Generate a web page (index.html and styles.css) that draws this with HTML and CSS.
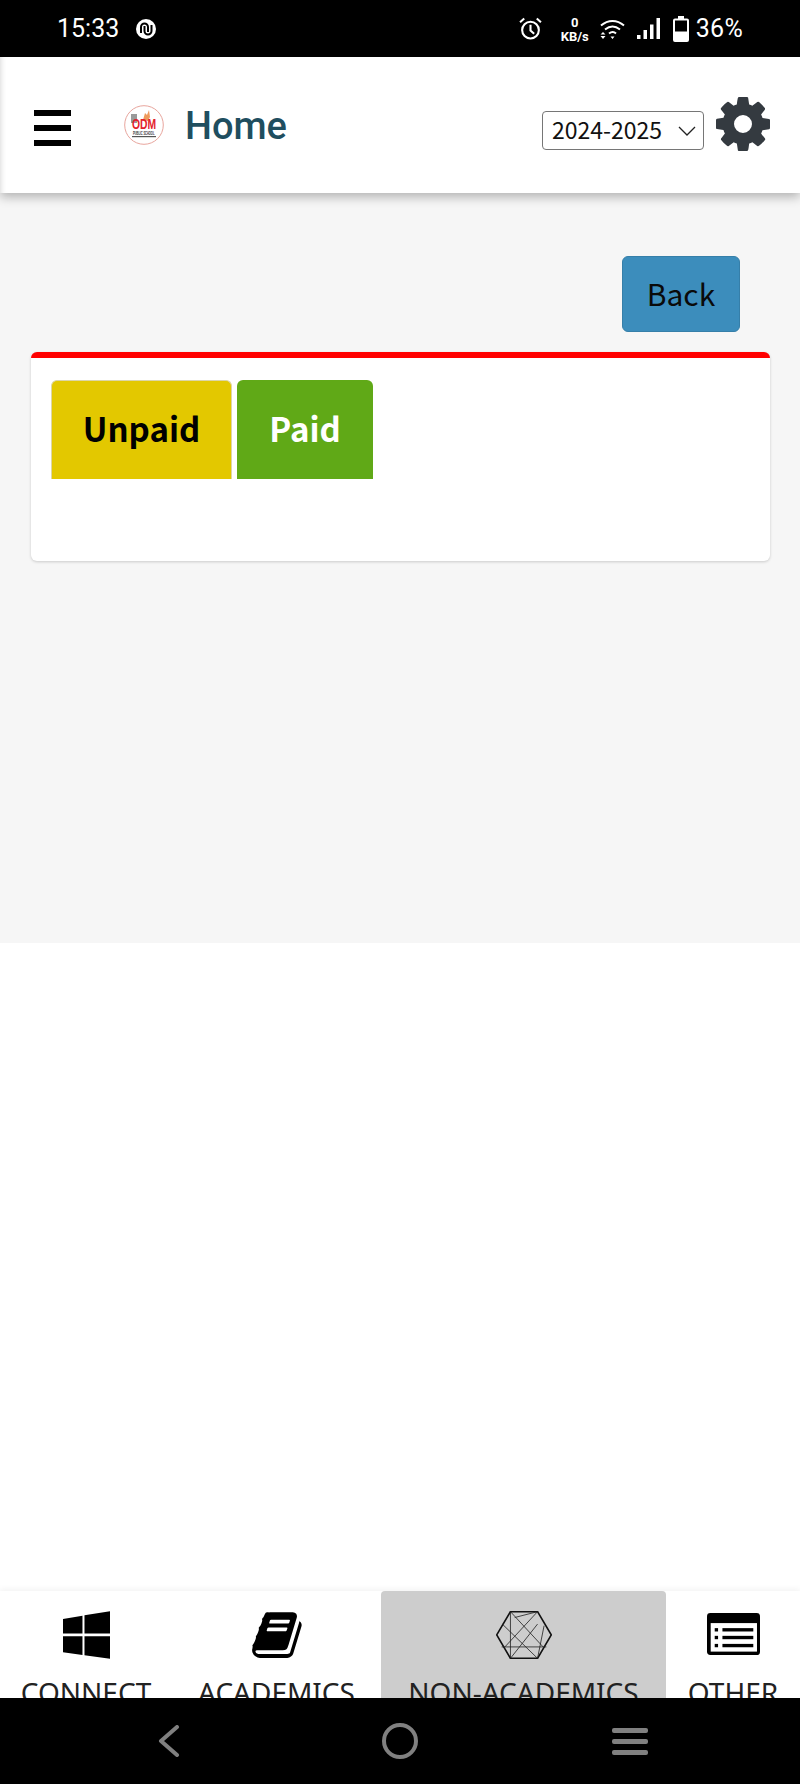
FILE: index.html
```html
<!DOCTYPE html>
<html lang="en">
<head>
  <meta charset="UTF-8" />
  <meta name="viewport" content="width=device-width, initial-scale=1.0"/>
  <title>Home</title>
  <link rel="stylesheet" href="styles.css">
</head>
<body>
  <div class="screen">
    <div class="status-bar">
      <span class="time">15:33</span>
      <svg class="status-app" viewBox="0 0 20 20">
        <circle cx="10" cy="10" r="10" fill="#fff"/>
        <path d="M5 14V8a3.500 3.500 0 0 1 7 0v5M8.500 7v5a3.500 3.500 0 0 0 7 0V6" fill="none" stroke="#000" stroke-width="2"/>
      </svg>
      <div class="status-right">
        <svg class="alarm" viewBox="0 0 22 22">
          <circle cx="11" cy="12.500" r="8" fill="none" stroke="#fff" stroke-width="2"/>
          <path d="M11 7.500v5.500l3.500 3M1 5l4-3.500M21 5l-4-3.500" fill="none" stroke="#fff" stroke-width="2"/>
        </svg>
        <div class="speed"><b>0</b><b>KB/s</b></div>
        <svg class="wifi" viewBox="0 0 25 21">
          <path d="M1 6.500c7-6 16-6 23 0M5 10.500c5-4 10-4 15 0M9 14.500c2.500-2 5-2 7 0" fill="none" stroke="#fff" stroke-width="2"/>
          <path d="M3 13l-2.500 2.500h5zM3 20l-2.500-3h5zM12.500 20l-2-2.500h4z" fill="#fff"/>
        </svg>
        <svg class="signal" viewBox="0 0 23 21">
          <rect x="0" y="17" width="3.500" height="4" fill="#fff"/>
          <rect x="6.500" y="12" width="3.500" height="9" fill="#fff"/>
          <rect x="13" y="6.500" width="3.500" height="14.500" fill="#fff"/>
          <rect x="19.500" y="0" width="3.500" height="21" fill="#fff"/>
        </svg>
        <svg class="battery" viewBox="0 0 16 26">
          <path d="M5 0h6v2.500h3a2 2 0 0 1 2 2V24a2 2 0 0 1-2 2H2a2 2 0 0 1-2-2V4.500a2 2 0 0 1 2-2h3z" fill="#fff"/>
          <rect x="2" y="4.500" width="12" height="11" fill="#000"/>
        </svg>
        <span class="percent">36%</span>
      </div>
    </div>

    <div class="header">
      <div class="hamburger"><span></span><span></span><span></span></div>
      <svg class="logo" viewBox="0 0 40 40">
        <circle cx="20" cy="20" r="19.300" fill="#fff" stroke="#e8a59d" stroke-width="1"/>
        <rect x="7" y="9" width="6" height="9" fill="#9a9a9a"/>
        <path d="M19 15l2-7 2 2 2-5 1 7-2 4z" fill="#ee9a5c"/>
        <text class="logo-odm" transform="translate(8 24) scale(.74 1)">ODM</text>
        <text class="logo-school" transform="translate(9 30) scale(.58 1)">PUBLIC SCHOOL</text>
        <rect x="8" y="31" width="24" height="1.200" fill="#555"/>
      </svg>
      <h1 class="title">Home</h1>
      <div class="year">
        <select class="year-select">
          <option>2024-2025</option>
        </select>
        <svg class="year-arrow" viewBox="0 0 18 10"><path d="M1 1l8 8 8-8" fill="none" stroke="#222" stroke-width="1.300"/></svg>
      </div>
      <svg class="gear" viewBox="128 128 1536 1536">
        <path fill="#343a40" d="M1152 896q0-106-75-181t-181-75-181 75-75 181 75 181 181 75 181-75 75-181zm512-109v222q0 12-8 23t-20 13l-185 28q-19 54-39 91 35 50 107 138 10 12 10 25t-9 23q-27 37-99 108t-94 71q-12 0-26-9l-138-108q-44 23-91 38-16 136-29 186-7 28-36 28h-222q-14 0-24.500-8.500t-11.500-21.500l-28-184q-49-16-90-37l-141 107q-10 9-25 9-14 0-25-11-126-114-165-168-7-10-7-23 0-12 8-23 15-21 51-66.500t54-70.500q-27-50-41-99l-183-27q-13-2-21-12.500t-8-23.500v-222q0-12 8-23t19-13l186-28q14-46 39-92-40-57-107-138-10-12-10-24 0-10 9-23 26-36 98.500-107.500t94.500-71.500q13 0 26 10l138 107q44-23 91-38 16-136 29-186 7-28 36-28h222q14 0 24.500 8.500t11.500 21.500l28 184q49 16 90 37l142-107q9-9 24-9 13 0 25 10 129 119 165 170 7 8 7 22 0 12-8 23-15 21-51 66.500t-54 70.500q26 50 41 98l183 28q13 2 21 12.500t8 23.500z"/>
      </svg>
    </div>

    <div class="main">
      <div class="back-row">
        <button class="back-btn">Back</button>
      </div>
      <div class="card">
        <div class="tabs">
          <div class="tab tab-unpaid">Unpaid</div>
          <div class="tab tab-paid">Paid</div>
        </div>
      </div>
    </div>

    <div class="blank"></div>

    <div class="bottom-tabs">
      <div class="bottom-tab">
        <svg class="icon-windows" viewBox="187 124 140 141">
          <path d="M187 147l58-10v53h-58zM251 136l76-12v66h-76zM187 198h58v56l-58-8zM251 198h76v67l-76-10z" fill="#000"/>
        </svg>
        <span class="bottom-label">CONNECT</span>
      </div>
      <div class="bottom-tab">
        <svg class="icon-book" viewBox="60 120 1680 1550">
          <path fill="#000" d="M1703 478q40 57 18 129l-275 906q-19 64-76.500 107.500t-122.500 43.500h-923q-77 0-148.500-53.500t-99.500-131.500q-24-67-2-127 0-4 3-27t4-37q1-8-3-21.500t-3-19.500q2-11 8-21t16.500-23.500 16.500-23.500q23-38 45-91.500t30-91.500q3-10 .5-30t-.5-28q3-11 17-28t17-23q21-36 42-92t25-90q1-9-2.500-32t.5-28q4-13 22-30.500t22-22.500q19-26 42.500-84.500t27.500-96.500q1-8-3-25.500t-2-26.500q2-8 9-18t18-23 17-21q8-12 16.500-30.500t15-35 16-36 19.500-32 26.500-23.500 36-11.500 47.500 5.500l-1 3q38-9 51-9h761q74 0 114 56t18 130l-274 906q-36 119-71.500 153.500t-128.500 34.500h-869q-27 0-38 15-11 16-1 43 24 70 144 70h923q29 0 56-15.500t35-41.500l300-987q7-22 5-57 38 15 59 43zm-1064 2q-4 13 2 22.500t20 9.500h608q13 0 25.500-9.500t16.500-22.500l21-64q4-13-2-22.500t-20-9.500h-608q-13 0-25.500 9.500t-16.500 22.500zm-83 256q-4 13 2 22.500t20 9.500h608q13 0 25.500-9.500t16.500-22.500l21-64q4-13-2-22.500t-20-9.500h-608q-13 0-25.500 9.500t-16.500 22.500z"/>
        </svg>
        <span class="bottom-label">ACADEMICS</span>
      </div>
      <div class="bottom-tab active">
        <svg class="icon-hex" viewBox="43 60 171 147">
          <path d="M45 133L87 62H170L212 133L170 205H87z" fill="none" stroke="#111" stroke-width="5"/>
          <path d="M87 62V205M87 62L187 170M170 62L70 170M170 62L100 80M170 205L190 105M60 170H197M87 205L170 100M170 205L62 100" fill="none" stroke="#222" stroke-width="2.500"/>
        </svg>
        <span class="bottom-label">NON-ACADEMICS</span>
      </div>
      <div class="bottom-tab">
        <svg class="icon-list" viewBox="922 130 158 125">
          <rect x="922" y="130" width="158" height="125" rx="10" fill="#000"/>
          <rect x="933" y="160" width="138" height="85" fill="#fff"/>
          <rect x="968" y="175" width="92" height="10" fill="#000"/>
          <rect x="968" y="198" width="92" height="10" fill="#000"/>
          <rect x="968" y="222" width="92" height="10" fill="#000"/>
          <rect x="945" y="175" width="10" height="10" fill="#000"/>
          <rect x="945" y="198" width="10" height="10" fill="#000"/>
          <rect x="945" y="222" width="10" height="10" fill="#000"/>
        </svg>
        <span class="bottom-label">OTHER</span>
      </div>
    </div>

    <div class="nav-bar">
      <svg class="nav-back" viewBox="0 0 22 32"><path d="M19 2L3 16l16 14" fill="none" stroke="#808080" stroke-width="4" stroke-linecap="round" stroke-linejoin="round"/></svg>
      <svg class="nav-home" viewBox="0 0 36 36"><circle cx="18" cy="18" r="16" fill="none" stroke="#808080" stroke-width="4"/></svg>
      <div class="nav-menu"><span></span><span></span><span></span></div>
    </div>
  </div>
</body>
</html>
```

FILE: styles.css
```css
* {
  box-sizing: border-box;
}
html, body {
  margin: 0;
  padding: 0;
}
body {
  background: #fff;
}
.screen {
  width: 800px;
  height: 1784px;
  display: flex;
  flex-direction: column;
  overflow: hidden;
}

/* status bar */
.status-bar {
  height: 57px;
  flex: none;
  background: #000;
  color: #fff;
  display: flex;
  align-items: center;
  padding: 0 57px 0 57px;
  font-family: Roboto, sans-serif;
}
.time {
  font-size: 25px;
}
.status-app {
  width: 20px;
  height: 20px;
  margin-left: 17px;
}
.status-right {
  margin-left: auto;
  display: flex;
  align-items: center;
}
.alarm {
  width: 23px;
  height: 23px;
}
.speed {
  width: 32px;
  margin-left: 17px;
  display: flex;
  flex-direction: column;
  align-items: center;
  font-size: 13px;
  line-height: 14px;
  padding-top: 2px;
}
.wifi {
  width: 25px;
  height: 21px;
  margin-left: 9px;
  margin-top: 2px;
}
.signal {
  width: 23px;
  height: 21px;
  margin-left: 12px;
  margin-top: -1px;
}
.battery {
  width: 16px;
  height: 26px;
  margin-left: 13px;
}
.percent {
  font-size: 25px;
  margin-left: 7px;
  letter-spacing: 0.3px;
}

/* header */
.header {
  height: 136px;
  flex: none;
  background: #fff;
  display: flex;
  align-items: center;
  padding: 0 30px 0 34px;
  box-shadow: 0 4px 10px rgba(0, 0, 0, 0.28), inset 6px 0 6px -6px rgba(0, 0, 0, 0.2);
  position: relative;
  z-index: 1;
}
.hamburger {
  width: 37px;
  display: flex;
  flex-direction: column;
  gap: 9px;
  margin-top: 5px;
}
.hamburger span {
  height: 6px;
  background: #000;
}
.logo {
  width: 40px;
  height: 40px;
  margin-left: 53px;
}
.logo-odm {
  font-family: "Liberation Sans", sans-serif;
  font-size: 14px;
  font-weight: bold;
  fill: #e3212b;
}
.logo-school {
  font-family: "Liberation Sans", sans-serif;
  font-size: 4.500px;
  font-weight: bold;
  fill: #333;
}
.title {
  margin: 2px 0 0 21px;
  font-family: Roboto, sans-serif;
  font-size: 38px;
  font-weight: 500;
  color: #1f4e5f;
}
.year {
  position: relative;
  margin-left: auto;
  margin-top: 10px;
}
.year-select {
  appearance: none;
  display: block;
  width: 162px;
  height: 39px;
  padding: 0 0 2px 9px;
  border: 1px solid #767676;
  border-radius: 4px;
  background: #fff;
  color: #111;
  font-family: "Noto Sans CJK SC", "Noto Sans", sans-serif;
  font-size: 23px;
}
.year-arrow {
  position: absolute;
  top: 15px;
  right: 8px;
  width: 18px;
  height: 10px;
}
.gear {
  width: 54px;
  height: 56px;
  margin-left: 12px;
  margin-top: -3px;
}

/* main content */
.main {
  height: 750px;
  flex: none;
  background: #f6f6f6;
  padding: 63px 30px 0 31px;
}
.back-row {
  display: flex;
  justify-content: flex-end;
  padding-right: 30px;
}
.back-btn {
  width: 118px;
  height: 76px;
  background: #3c8dbc;
  border: 1px solid #367fa9;
  border-radius: 6px;
  color: #0a0a0a;
  font-family: "Noto Sans CJK SC", "Noto Sans", sans-serif;
  font-size: 30px;
  padding: 0 0 3px;
}
.card {
  margin-top: 20px;
  height: 209px;
  background: #fff;
  border-top: 6px solid #f00;
  border-radius: 6px;
  box-shadow: 0 1px 3px rgba(0, 0, 0, 0.18);
  padding: 22px 0 0 20px;
}
.tabs {
  display: flex;
  gap: 5px;
  align-items: flex-end;
}
.tab {
  display: flex;
  align-items: center;
  justify-content: center;
  border-radius: 6px 6px 0 0;
  font-family: "Noto Sans CJK SC", "Noto Sans", sans-serif;
  font-size: 33px;
  font-weight: bold;
  padding-bottom: 4px;
}
.tab-unpaid {
  width: 181px;
  height: 99px;
  background: #e3c800;
  color: #000;
  border: 1px solid #dcd6a8;
  border-bottom: 0;
}
.tab-paid {
  width: 136px;
  height: 99px;
  background: #60a917;
  color: #fff;
}
.blank {
  flex: 1;
  background: #fff;
}

/* bottom tabs, cut off by the nav bar */
.bottom-tabs {
  height: 107px;
  flex: none;
  display: grid;
  grid-template-columns: 172px 209px 285px 134px;
  background: #fff;
  box-shadow: 0 -2px 6px rgba(0, 0, 0, 0.05);
  overflow: hidden;
}
.bottom-tab {
  display: flex;
  flex-direction: column;
  align-items: center;
  padding-top: 20px;
  height: 140px;
  white-space: nowrap;
}
.bottom-tab.active {
  background: #cdcdcd;
  border-radius: 4px 4px 0 0;
}
.bottom-tab svg {
  flex: none;
  height: 48px;
}
.icon-windows {
  width: 47px;
}
.icon-book {
  width: 50px;
}
.icon-hex {
  width: 56px;
}
.icon-list {
  width: 53px;
  padding: 2px 0 4px;
}
.bottom-label {
  margin-top: 14px;
  font-family: "Noto Sans", sans-serif;
  font-size: 28px;
  line-height: 38px;
  color: #222;
}

/* android nav */
.nav-bar {
  height: 86px;
  flex: none;
  background: #000;
  display: flex;
  align-items: center;
  padding-left: 158px;
}
.nav-back {
  width: 22px;
  height: 32px;
}
.nav-home {
  width: 36px;
  height: 36px;
  margin-left: 202px;
}
.nav-menu {
  width: 36px;
  margin-left: 194px;
  display: flex;
  flex-direction: column;
  gap: 6px;
}
.nav-menu span {
  height: 5px;
  border-radius: 2px;
  background: #808080;
}
```
